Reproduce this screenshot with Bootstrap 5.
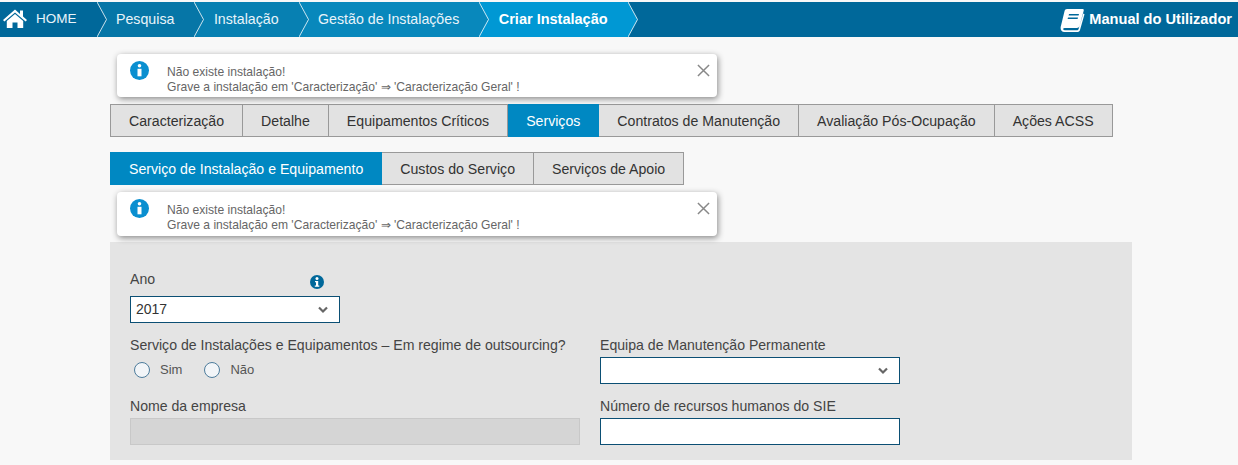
<!DOCTYPE html>
<html lang="pt-PT">
<head>
    <meta charset="UTF-8">
    <meta name="viewport" content="width=device-width, initial-scale=1.0">
    <title>Criar Instalação</title>
    <link href="https://cdn.jsdelivr.net/npm/bootstrap@5.3.0/dist/css/bootstrap.min.css" rel="stylesheet">
    <style>
        body {
            background-color: #f8f8f8;
            font-family: "Liberation Sans", Arial, sans-serif;
            font-size: 14px;
            color: #444;
            height: 465px;
            overflow: hidden;
        }
        .top-bar {
            margin-top: 2px;
            height: 35px;
            background-color: #00689a;
        }
        .crumb {
            position: relative;
            display: flex;
            align-items: center;
            height: 35px;
            padding: 0 20px 0 19.5px;
            color: #e8f4fa;
            font-size: 14.2px;
            text-decoration: none;
        }
        .crumb svg.crumb-tip {
            position: absolute;
            left: 100%;
            top: 0;
            z-index: 1;
        }
        .crumb-home { background-color: #00689a; padding: 0 20px 0 3px; gap: 9px; font-size: 13.5px; }
        .home-icon { margin-bottom: 4px; }
        .crumb-1 { background-color: #0676a7; }
        .crumb-2 { background-color: #0780b2; }
        .crumb-3 { background-color: #0888bc; }
        .crumb-4 { background-color: #0098d4; color: #fff; font-weight: 700; font-size: 14.5px; }
        .manual-link {
            color: #fff;
            font-weight: 700;
            font-size: 14.6px;
            text-decoration: none;
            gap: 4px;
            margin-right: 6px;
        }
        .page-body { margin-left: 110px; width: 1022px; }
        .info-alert {
            display: flex;
            width: 600px;
            margin: 0 0 0 7px;
            padding: 7px 7px 0 13px;
            background-color: #fff;
            border: 0;
            border-radius: 4px;
            box-shadow: 1px 2px 6px rgba(0, 0, 0, .45);
            color: #666;
            font-size: 12.1px;
            line-height: 14.500px;
        }
        .info-alert .alert-text { margin: 4px 0 0 18px; flex-grow: 1; }
        .close-x { background: none; border: 0; padding: 0; width: 13px; height: 13px; margin: 3px 0 0 0; display: flex; }
        .alert-first { margin-top: 17px; height: 43px; }
        .alert-second { margin-top: 7px; height: 44px; }
        .tab-row { display: flex; }
        .tab-row .nav-link {
            height: 33px;
            padding: 0 18px;
            line-height: 33px;
            font-size: 14.15px;
            color: #333;
            background-color: #e2e2e2;
            border: 1px solid #999;
            border-left-width: 0;
            border-radius: 0;
        }
        .tab-row .nav-item:first-child .nav-link { border-left-width: 1px; }
        .tab-row .nav-link.active { background-color: #0088c2; border-color: #0088c2; color: #fff; }
        .main-tabs { margin-top: 7px; }
        .sub-tabs { margin-top: 15px; }
        .form-panel {
            margin-top: 6px;
            height: 218px;
            padding: 28px 20px 0;
            background-color: #e4e4e4;
        }
        .form-col-left { width: 450px; }
        .form-col-right { width: 300px; margin-left: 20px; }
        .form-panel label.field-label { display: block; margin: 0; font-size: 14.1px; line-height: 18px; color: #444; }
        .form-panel .form-select,
        .form-panel .form-control {
            height: 27px;
            padding: 0 5px;
            font-size: 14px;
            color: #333;
            background-color: #fff;
            border: 1px solid #0b4f74;
            border-radius: 0;
            box-shadow: none;
        }
        .form-panel .form-select {
            background-image: url("data:image/svg+xml,%3csvg xmlns='http://www.w3.org/2000/svg' viewBox='0 0 10 8'%3e%3cpath fill='none' stroke='%23666' stroke-width='2.2' d='M1 1.5l4 4 4-4'/%3e%3c/svg%3e");
            background-position: right 11px center;
            background-size: 10px 8px;
        }
        .form-panel .form-control:disabled {
            background-color: #d5d5d5;
            border-color: #c8c8c8;
        }
        .year-field { width: 210px; }
        .year-field .form-select { margin-top: 7px; }
        .year-info { margin-right: 16px; margin-top: 5px; display: flex; }
        .row-second { margin-top: 9px; }
        .row-third { margin-top: 13px; }
        .row-second .form-select { margin-top: 3px; }
        .row-third .form-control { margin-top: 3px; }
        .radio-line { display: flex; gap: 22px; margin: 7px 0 0 4px; height: 18px; }
        .radio-line .form-check { display: flex; align-items: center; gap: 10px; min-height: 0; margin: 0; padding: 0; font-size: 13px; }
        .radio-line .form-check-input {
            float: none;
            width: 16px;
            height: 16px;
            margin: 0;
            background-color: #f2f5f8;
            border: 1px solid #4d7c9c;
        }
        .radio-line .form-check-label { color: #555; }
    </style>
</head>
<body>
    <!-- Top navigation -->
    <div class="top-bar d-flex justify-content-between align-items-center">
        <nav class="d-flex">
            <a class="crumb crumb-home" href="#">
                <svg class="home-icon" width="24" height="20" viewBox="0 0 24 20"><path fill="#fff" d="M12 1.5 0 12l1.4 1.6L12 4.4l10.6 9.2L24 12l-4-3.5V2.5h-3v3.4z"/><path fill="#fff" d="M12 6 3.8 13.1V20h5.7v-5.5h5V20h5.7v-6.9z"/></svg>
                HOME
                <svg class="crumb-tip" width="11" height="35" viewBox="0 0 11 35"><path fill="#00689a" d="M0 0l9.5 17.5L0 35z"/><path fill="none" stroke="#fff" stroke-width=".8" d="M0 0l9.5 17.5L0 35"/></svg>
            </a>
            <a class="crumb crumb-1" href="#">Pesquisa
                <svg class="crumb-tip" width="11" height="35" viewBox="0 0 11 35"><path fill="#0676a7" d="M0 0l9.5 17.5L0 35z"/><path fill="none" stroke="#fff" stroke-width=".8" d="M0 0l9.5 17.5L0 35"/></svg>
            </a>
            <a class="crumb crumb-2" href="#">Instalação
                <svg class="crumb-tip" width="11" height="35" viewBox="0 0 11 35"><path fill="#0780b2" d="M0 0l9.5 17.5L0 35z"/><path fill="none" stroke="#fff" stroke-width=".8" d="M0 0l9.5 17.5L0 35"/></svg>
            </a>
            <a class="crumb crumb-3" href="#">Gestão de Instalações
                <svg class="crumb-tip" width="11" height="35" viewBox="0 0 11 35"><path fill="#0888bc" d="M0 0l9.5 17.5L0 35z"/><path fill="none" stroke="#fff" stroke-width=".8" d="M0 0l9.5 17.5L0 35"/></svg>
            </a>
            <a class="crumb crumb-4" href="#">Criar Instalação
                <svg class="crumb-tip" width="11" height="35" viewBox="0 0 11 35"><path fill="#0098d4" d="M0 0l9.5 17.5L0 35z"/><path fill="none" stroke="#fff" stroke-width=".8" d="M0 0l9.5 17.5L0 35"/></svg>
            </a>
        </nav>
        <a class="manual-link d-flex align-items-center" href="#">
            <svg width="25" height="24" viewBox="0 0 25 24"><path fill="#fff" d="M7 1h15.5c1 0 1.5.7 1.2 1.7L19.5 18c-.4 1.3-1.2 2-2.6 2H4.6c-1.3 0-1.7.9-1.3 1.5.3.5.8.7 1.5.7H17c.8 0 1.3-.3 1.6-1.2L23.300 5.500l1.200.8-4.500 15.600c-.4 1.300-1.500 2.100-2.900 2.100H4.500C2 24 .3 22.200.6 19.500.7 18.800.9 18 1.100 17.300L4.500 3.200C4.900 1.800 5.700 1 7 1z"/><path fill="#00689a" d="M9 6h10l-.4 1.500h-10zM8 9.500h10l-.4 1.500h-10z"/></svg>
            Manual do Utilizador
        </a>
    </div>

    <div class="page-body">
        <div class="alert info-alert alert-first" role="alert">
            <svg width="19" height="19" viewBox="0 0 19 19" class="flex-shrink-0"><circle cx="9.5" cy="9.5" r="9.500" fill="#0a8fd0"/><circle cx="9.500" cy="4.800" r="1.800" fill="#fff"/><rect x="7.500" y="7.800" width="4" height="7.500" fill="#fff"/></svg>
            <div class="alert-text">Não existe instalação!<br>Grave a instalação em 'Caracterização' ⇒ 'Caracterização Geral' !</div>
            <button type="button" class="close-x" aria-label="Fechar"><svg width="13" height="13" viewBox="0 0 14 14"><path stroke="#888" stroke-width="1.600" d="M1 1l12 12M13 1 1 13"/></svg></button>
        </div>

        <ul class="nav tab-row main-tabs">
            <li class="nav-item"><a class="nav-link" href="#">Caracterização</a></li>
            <li class="nav-item"><a class="nav-link" href="#">Detalhe</a></li>
            <li class="nav-item"><a class="nav-link" href="#">Equipamentos Críticos</a></li>
            <li class="nav-item"><a class="nav-link active" href="#">Serviços</a></li>
            <li class="nav-item"><a class="nav-link" href="#">Contratos de Manutenção</a></li>
            <li class="nav-item"><a class="nav-link" href="#">Avaliação Pós-Ocupação</a></li>
            <li class="nav-item"><a class="nav-link" href="#">Ações ACSS</a></li>
        </ul>

        <ul class="nav tab-row sub-tabs">
            <li class="nav-item"><a class="nav-link active" href="#">Serviço de Instalação e Equipamento</a></li>
            <li class="nav-item"><a class="nav-link" href="#">Custos do Serviço</a></li>
            <li class="nav-item"><a class="nav-link" href="#">Serviços de Apoio</a></li>
        </ul>

        <div class="alert info-alert alert-second" role="alert">
            <svg width="19" height="19" viewBox="0 0 19 19" class="flex-shrink-0"><circle cx="9.5" cy="9.5" r="9.500" fill="#0a8fd0"/><circle cx="9.500" cy="4.800" r="1.800" fill="#fff"/><rect x="7.500" y="7.800" width="4" height="7.500" fill="#fff"/></svg>
            <div class="alert-text">Não existe instalação!<br>Grave a instalação em 'Caracterização' ⇒ 'Caracterização Geral' !</div>
            <button type="button" class="close-x" aria-label="Fechar"><svg width="13" height="13" viewBox="0 0 14 14"><path stroke="#888" stroke-width="1.600" d="M1 1l12 12M13 1 1 13"/></svg></button>
        </div>

        <form class="form-panel">
            <div class="year-field">
                <div class="d-flex justify-content-between">
                    <label class="field-label" for="ano">Ano</label>
                    <span class="year-info"><svg width="14" height="14" viewBox="0 0 14 14"><circle cx="7" cy="7" r="7" fill="#00689a"/><circle cx="7" cy="3.500" r="1.500" fill="#fff"/><path fill="#fff" d="M5 6h3.200v4.400H9.300v1.400H4.800v-1.400H6V7.300H5z"/></svg></span>
                </div>
                <select class="form-select" id="ano"><option>2017</option></select>
            </div>

            <div class="d-flex row-second">
                <div class="form-col-left">
                    <label class="field-label pt-1">Serviço de Instalações e Equipamentos – Em regime de outsourcing?</label>
                    <div class="radio-line">
                        <div class="form-check">
                            <input class="form-check-input" type="radio" name="outsourcing" id="sim">
                            <label class="form-check-label" for="sim">Sim</label>
                        </div>
                        <div class="form-check">
                            <input class="form-check-input" type="radio" name="outsourcing" id="nao">
                            <label class="form-check-label" for="nao">Não</label>
                        </div>
                    </div>
                </div>
                <div class="form-col-right">
                    <label class="field-label pt-1" for="equipa">Equipa de Manutenção Permanente</label>
                    <select class="form-select" id="equipa"><option></option></select>
                </div>
            </div>

            <div class="d-flex row-third">
                <div class="form-col-left">
                    <label class="field-label" for="empresa">Nome da empresa</label>
                    <input class="form-control" id="empresa" type="text" disabled>
                </div>
                <div class="form-col-right">
                    <label class="field-label" for="recursos">Número de recursos humanos do SIE</label>
                    <input class="form-control" id="recursos" type="text">
                </div>
            </div>
        </form>
    </div>

    <script src="https://cdn.jsdelivr.net/npm/bootstrap@5.3.0/dist/js/bootstrap.bundle.min.js"></script>
</body>
</html>
